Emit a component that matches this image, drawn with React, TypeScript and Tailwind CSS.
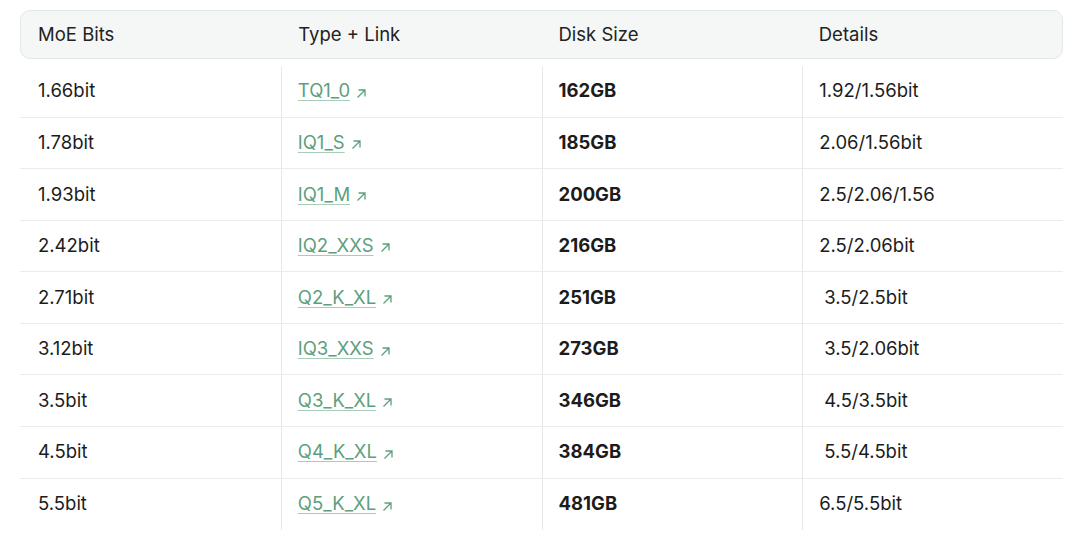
const rows = [
  { bits: '1.66bit', type: 'TQ1_0', size: '162GB', details: '1.92/1.56bit', pad: false },
  { bits: '1.78bit', type: 'IQ1_S', size: '185GB', details: '2.06/1.56bit', pad: false },
  { bits: '1.93bit', type: 'IQ1_M', size: '200GB', details: '2.5/2.06/1.56', pad: false },
  { bits: '2.42bit', type: 'IQ2_XXS', size: '216GB', details: '2.5/2.06bit', pad: false },
  { bits: '2.71bit', type: 'Q2_K_XL', size: '251GB', details: '3.5/2.5bit', pad: true },
  { bits: '3.12bit', type: 'IQ3_XXS', size: '273GB', details: '3.5/2.06bit', pad: true },
  { bits: '3.5bit', type: 'Q3_K_XL', size: '346GB', details: '4.5/3.5bit', pad: true },
  { bits: '4.5bit', type: 'Q4_K_XL', size: '384GB', details: '5.5/4.5bit', pad: true },
  { bits: '5.5bit', type: 'Q5_K_XL', size: '481GB', details: '6.5/5.5bit', pad: false },
];

function ArrowOut() {
  return (
    <svg width="11" height="11" viewBox="0 0 11 11" className="ml-[6px] mt-[4px] shrink-0" fill="none">
      <path d="M1.5 9.5 L9 2 M2.5 2 H9 V8.5" stroke="#5d9f7c" strokeWidth="1.3" />
    </svg>
  );
}

export default function App() {
  return (
    <div
      className="h-[542px] w-[1080px] bg-white pl-5 pt-[10px] text-[18.5px] text-[#1c1c1c]"
      style={{ fontFamily: 'Inter, "Liberation Sans", sans-serif' }}
    >
      <div className="w-[1043px]">
        <div className="grid h-[49px] grid-cols-4 items-center rounded-[10px] border border-[#e2e9e4] bg-[#f4f7f5] text-[#222]">
          <div className="pl-[17px]">MoE Bits</div>
          <div className="pl-[17px]">Type + Link</div>
          <div className="pl-[17px]">Disk Size</div>
          <div className="pl-[17px]">Details</div>
        </div>
        <div className="mt-[7px]">
          {rows.map((r, i) => (
            <div
              key={r.bits}
              className={`grid h-[51.57px] grid-cols-4 ${i < rows.length - 1 ? 'border-b border-[#e8ecea]' : ''}`}
            >
              <div className="flex items-center pl-[18px]">{r.bits}</div>
              <div className="flex items-center border-l border-[#e6e9e8] pl-[16px]">
                <a href="#" className="text-[#5d9f7c] underline decoration-[#a9ccb8] decoration-1 underline-offset-[3px]">
                  {r.type}
                </a>
                <ArrowOut />
              </div>
              <div className="flex items-center border-l border-[#e6e9e8] pl-[16px] font-bold">{r.size}</div>
              <div className={`flex items-center border-l border-[#e6e9e8] ${r.pad ? 'pl-[21px]' : 'pl-[16px]'}`}>
                {r.details}
              </div>
            </div>
          ))}
        </div>
      </div>
    </div>
  );
}
